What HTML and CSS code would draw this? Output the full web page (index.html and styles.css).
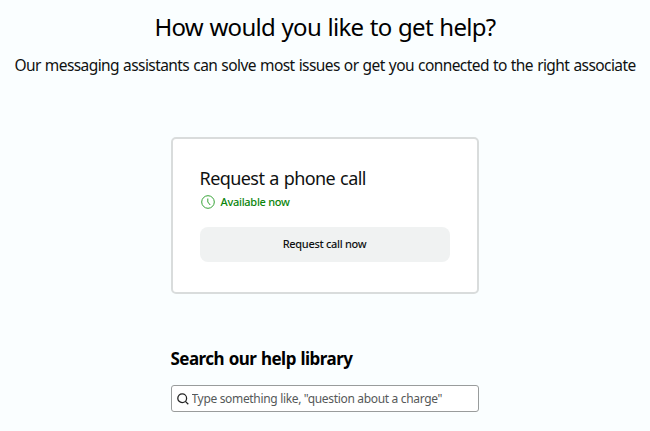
FILE: index.html
```html
<!DOCTYPE html>
<html lang="en">
<head>
<meta charset="utf-8">
<title>Get help</title>
<link rel="stylesheet" href="styles.css">
</head>
<body>
<main class="page">
  <h1 class="title">How would you like to get help?</h1>
  <p class="subtitle">Our messaging assistants can solve most issues or get you connected to the right associate</p>
  <section class="card">
    <h2 class="card-title">Request a phone call</h2>
    <p class="status">
      <svg class="clock" viewBox="0 0 14 14" fill="none" stroke="currentColor"><circle cx="7" cy="7" r="6.3"/><path d="M6.8 3.5V7l2.4 3"/></svg>
      <span>Available now</span>
    </p>
    <button class="call" type="button">Request call now</button>
  </section>
  <section class="library">
    <h2 class="library-title">Search our help library</h2>
    <label class="search">
      <svg class="lens" viewBox="0 0 12 12" fill="none" stroke="currentColor" stroke-width="1.3"><circle cx="5.2" cy="5.2" r="4.4"/><path d="M8.4 8.4l2.9 2.9"/></svg>
      <input class="field" type="text" placeholder="Type something like, &quot;question about a charge&quot;">
    </label>
  </section>
</main>
</body>
</html>
```

FILE: styles.css
```css
* { box-sizing: border-box; }
body { margin: 0; background: #fafeff; color: #0f1111; font-family: "Noto Sans", sans-serif; }
.page { height: 431px; display: flex; flex-direction: column; align-items: center; padding-top: 11px; overflow: hidden; }
h1, h2, p { margin: 0; white-space: nowrap; }
.title { font-size: 24px; line-height: 32px; font-weight: 400; letter-spacing: -0.68px; word-spacing: 0.8px; color: #000; }
.subtitle { margin-top: 11px; font-size: 15.5px; line-height: 22px; letter-spacing: -0.58px; word-spacing: 0.65px; }
.card { width: 308px; height: 157px; margin: 61px 0 0 -1px; padding: 27px 26px 0 27px; background: #fff; border: 2px solid #d9dcdc; border-radius: 5px; }
.card-title { font-size: 18px; line-height: 24px; font-weight: 400; letter-spacing: -0.57px; word-spacing: 0.8px; }
.status { display: flex; align-items: center; gap: 6px; height: 20px; margin-top: 2px; color: #0b850b; font-size: 11px; line-height: 15px; font-weight: 500; letter-spacing: -0.28px; }
.status span { padding-bottom: 1px; }
.clock { width: 14px; height: 14px; margin-left: 1px; color: #36a336; }
.call { display: block; width: 250px; height: 35px; margin-top: 15px; padding: 0 0 2px; border: 0; border-radius: 8px; background: #f0f2f2; color: #0f1111; font: 500 11px "Noto Sans", sans-serif; letter-spacing: -0.3px; }
.library { width: 308px; margin: 53px 0 0 -1px; }
.library-title { font-size: 17px; line-height: 24px; font-weight: 700; letter-spacing: -0.53px; word-spacing: 0.7px; color: #000; }
.search { display: flex; align-items: center; gap: 3px; height: 27px; margin-top: 14px; padding: 0 5px; background: #fff; border: 1px solid #999c9c; border-radius: 3px; }
.lens { width: 12px; height: 12px; flex: none; color: #222; }
.field { flex: 1; min-width: 0; padding: 0; border: 0; outline: 0; background: none; font: 12px "Noto Sans", sans-serif; letter-spacing: -0.33px; }
.field::placeholder { color: #565959; opacity: 1; }
```
